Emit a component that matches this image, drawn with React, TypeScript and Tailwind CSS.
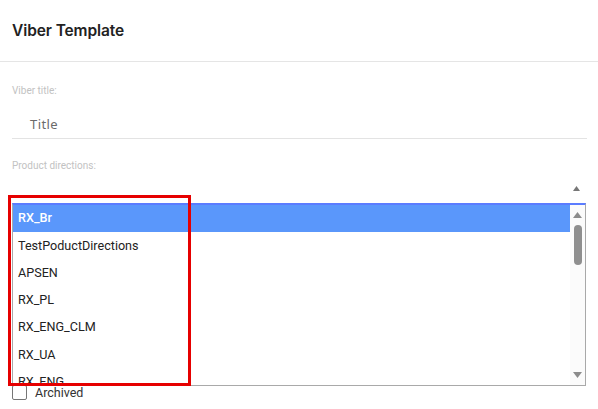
import React from 'react'

const items = ['RX_Br', 'TestPoductDirections', 'APSEN', 'RX_PL', 'RX_ENG_CLM', 'RX_UA', 'RX_ENG', 'RX_KZ']

export default function App() {
  return (
    <div className="relative w-[598px] h-[409px] bg-white overflow-hidden font-['Noto_Sans',sans-serif]">
      {/* Header */}
      <div className="h-[62px] flex items-center px-3 border-b border-[#e5e5e5]">
        <h1 className="text-[15.5px] font-semibold text-[#222] font-['Inter',sans-serif] tracking-[-0.1px]">Viber Template</h1>
      </div>

      <div className="px-3">
        {/* Viber title */}
        <div className="pt-[22px] text-[10px] text-[#c2c2c2] leading-[14px] font-['Roboto',sans-serif]">Viber title:</div>
        <div className="mt-[14px] h-[27px] pl-[18px] flex items-center border-b border-[#e3e3e3] mr-[-1px] text-[13px] text-[#6b6b6b] tracking-[0.4px] font-['Noto_Sans',sans-serif]">
          Title
        </div>

        {/* Product directions */}
        <div className="pt-[20px] text-[10px] text-[#c2c2c2] leading-[14px] font-['Roboto',sans-serif]">Product directions:</div>
        <div className="h-[30px] flex justify-end items-center pr-[6px]">
          <svg width="7" height="5" viewBox="0 0 7 5"><path d="M3.5 0 L7 5 L0 5 Z" fill="#777" /></svg>
        </div>

        {/* Listbox */}
        <div className="flex h-[183px] border border-[#a9a9a9] border-t-[2px] border-t-[#5b7cff] overflow-hidden font-['Roboto',sans-serif]">
          <div className="flex-1 flex flex-col">
            {items.map((item, i) => (
              <div
                key={item}
                className={`h-[27.3px] shrink-0 flex items-center pl-[5px] text-[12.6px] ${i === 0 ? 'bg-[#5a97fb] text-white font-medium' : 'text-[#222]'}`}
              >
                {item}
              </div>
            ))}
          </div>
          {/* Scrollbar */}
          <div className="w-[15px] bg-[#fbfbfb] flex flex-col items-center justify-between py-[7px]">
            <div className="flex flex-col items-center">
              <svg width="9" height="6" viewBox="0 0 9 6"><path d="M4.5 0 L9 6 L0 6 Z" fill="#8c8c8c" /></svg>
              <div className="mt-[7px] w-[8px] h-[40px] rounded-full bg-[#8f8f8f]" />
            </div>
            <svg width="9" height="6" viewBox="0 0 9 6"><path d="M0 0 L9 0 L4.5 6 Z" fill="#8c8c8c" /></svg>
          </div>
        </div>

        {/* Archived */}
        <div className="flex items-center gap-[8px] -mt-[1px]">
          <div className="w-[15px] h-[15px] border border-[#767676] rounded-[2px] bg-white" />
          <span className="text-[12.5px] leading-[15px] text-[#333] font-['Roboto',sans-serif]">Archived</span>
        </div>
      </div>

      {/* Annotation highlight */}
      <div className="absolute left-[8px] top-[195px] w-[183px] h-[191px] border-[3px] border-[#e60000] pointer-events-none" />
    </div>
  )
}
